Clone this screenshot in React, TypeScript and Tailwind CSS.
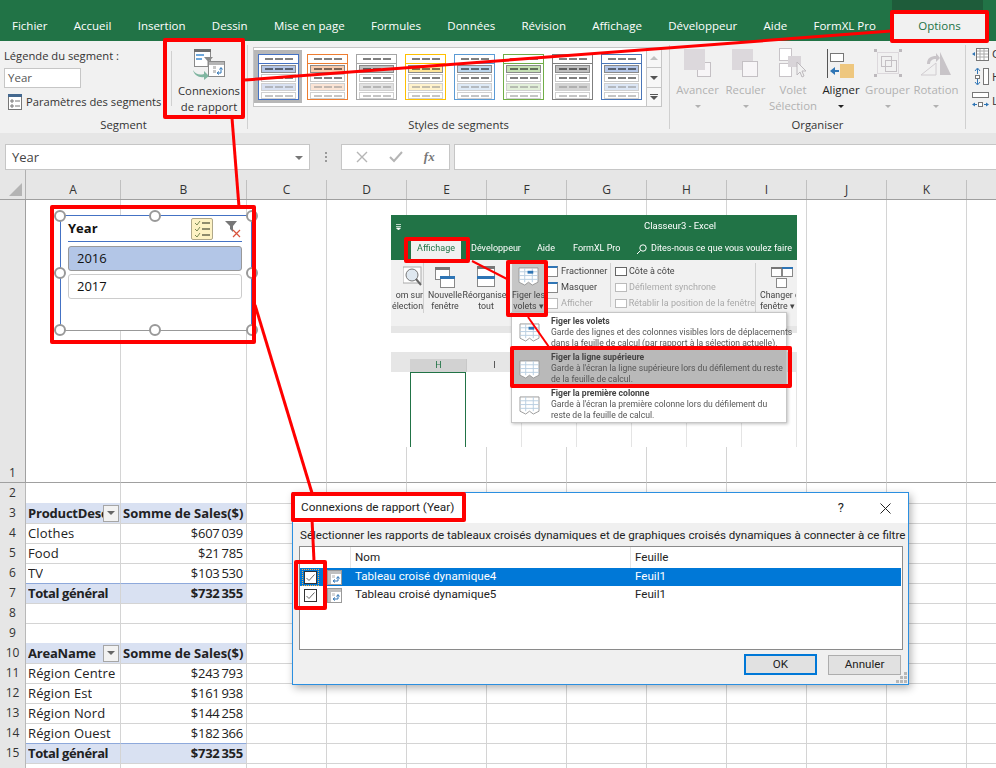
import React from "react";

const tabs = ["Fichier", "Accueil", "Insertion", "Dessin", "Mise en page", "Formules", "Données", "Révision", "Affichage", "Développeur", "Aide", "FormXL Pro"];
const columns = ["C", "D", "E", "F", "G", "H", "I", "J", "K", ""];

const swatches = [
  { edge: "#4472c4", dark: "#b4c6e7", light: "#d9e1f2" },
  { edge: "#ed7d31", dark: "#f8cbad", light: "#fbe4d5" },
  { edge: "#a5a5a5", dark: "#c0c0c0", light: "#e2e2e2" },
  { edge: "#ffc000", dark: "#ffe699", light: "#fff2cc" },
  { edge: "#5b9bd5", dark: "#bdd7ee", light: "#deeaf6" },
  { edge: "#70ad47", dark: "#c5e0b4", light: "#e2efd9" },
  { edge: "#7f7f7f", dark: "#bfbfbf", light: "#d4d4d4" },
  { edge: "#4a76b8", dark: "#b4c6e7", light: "#dce6f5" },
];

type Row = { n: number; kind?: "head" | "total"; a?: string; b?: string; filter?: boolean };

const rows: Row[] = [
  { n: 2 },
  { n: 3, kind: "head", a: "ProductDesc", b: "Somme de Sales($)", filter: true },
  { n: 4, a: "Clothes", b: "$607\u2009039" },
  { n: 5, a: "Food", b: "$21\u2009785" },
  { n: 6, a: "TV", b: "$103\u2009530" },
  { n: 7, kind: "total", a: "Total général", b: "$732\u2009355" },
  { n: 8 },
  { n: 9 },
  { n: 10, kind: "head", a: "AreaName", b: "Somme de Sales($)", filter: true },
  { n: 11, a: "Région Centre", b: "$243\u2009793" },
  { n: 12, a: "Région Est", b: "$161\u2009938" },
  { n: 13, a: "Région Nord", b: "$144\u2009258" },
  { n: 14, a: "Région Ouest", b: "$182\u2009366" },
  { n: 15, kind: "total", a: "Total général", b: "$732\u2009355" },
  { n: 16 },
];

function Swatch({ edge, dark, light }: { edge: string; dark: string; light: string }) {
  const dash = (y: number, color: string) => (
    <path d={`M7 ${y}h8M17 ${y}h8M27 ${y}h8`} stroke={color} strokeWidth="1" fill="none" />
  );
  return (
    <svg width="41" height="46" viewBox="0 0 41 46">
      <rect x="0.5" y="0.5" width="40" height="45" fill="#fff" stroke={edge} />
      <rect x="0.5" y="0.5" width="40" height="9" fill="#fff" stroke={edge} />
      <rect x="3.5" y="11.5" width="34" height="7" fill={dark} stroke="#8a8a8a" />
      <rect x="3.5" y="20.5" width="34" height="7" fill="#fff" stroke="#c8c8c8" />
      <rect x="3.5" y="29.5" width="34" height="7" fill={light} stroke="#d0d0d0" />
      <rect x="3.5" y="38.5" width="34" height="6" fill="#fff" stroke="#d0d0d0" />
      {dash(5, "#000")}
      {dash(15, "#000")}
      {dash(24, "#000")}
      {dash(33, "#8a8a8a")}
      {dash(42, "#8a8a8a")}
    </svg>
  );
}

function ReportIcon() {
  return (
    <svg width="33" height="31" viewBox="0 0 33 31">
      <rect x="1.5" y="0.5" width="16" height="17" fill="#fff" stroke="#8a8a8a" />
      <rect x="1" y="0" width="17" height="3" fill="#6e6e6e" />
      <path d="M3 5h8v2H3zM3 9h6v2H3z" fill="#6fa8dc" />
      <path d="M11 8h9l-3.5 4v5l-2 1v-6z" fill="#8a8a8a" />
      <rect x="15.5" y="12.5" width="16" height="15" fill="#fff" stroke="#8a8a8a" />
      <rect x="16" y="13" width="15" height="3" fill="#b5b5b5" />
      <path d="M20 17h3v3h-3zM20 21h3v3h-3z" fill="#c8c8c8" />
      <path d="M25 24h3v-5M26.5 20.5l1.5-2 1.5 2M26 22.5l-2 1.5 2 1.5" stroke="#2f75b5" strokeWidth="1" fill="none" />
      <path d="M0 21c3 5 7 5 11 4v-3l5 5-5 4v-3c-5 1-10-2-11-7z" fill="#7fb5a0" />
    </svg>
  );
}

function PaneIcon({ highlight }: { highlight?: boolean }) {
  return (
    <svg className="shrink-0" width="21" height="19" viewBox="0 0 22 20">
      <path d="M1 1h20v15l-6 3-4-3-4 3-6-3z" fill="#fff" stroke="#9a9a9a" />
      <path d="M1 5h20M1 9h20M1 13h20M7 1v15M15 1v15" stroke="#b9cfe0" />
      {highlight && <rect x="10" y="4" width="6" height="3" fill="#2f75b5" />}
    </svg>
  );
}

function LinkIcon() {
  return (
    <svg width="15" height="15" viewBox="0 0 15 15">
      <rect x="0.5" y="0.5" width="14" height="14" fill="#fff" stroke="#9a9a9a" />
      <path d="M1 1h13v3H1zM1 4h3v10H1z" fill="#c0c0c0" />
      <path d="M5 5h3v3H5z" fill="#d8d8d8" />
      <path d="M7 11h4V7M9.5 8.5L11 6.5l1.5 2M8 9.5L6 11l2 1.5" stroke="#2f75b5" fill="none" />
    </svg>
  );
}

function CheckBox({ focus }: { focus?: boolean }) {
  return (
    <div className={`flex h-[15px] w-[15px] items-center justify-center ${focus ? "outline-1 outline-dotted outline-[#ffb13d]" : ""}`}>
      <div className="flex h-[13px] w-[13px] items-center justify-center border border-[#333] bg-white">
        <svg width="11" height="11" viewBox="0 0 11 11">
          <path d="M1.5 6l2.5 2.5 5.5-6" stroke="#666" strokeWidth="1" fill="none" />
        </svg>
      </div>
    </div>
  );
}

function Group({ className, label, children }: { className: string; label: string; children: React.ReactNode }) {
  return (
    <div className={`mt-1 flex h-[84px] shrink-0 flex-col border-r border-[#d0d0d0] ${className}`}>
      <div className="flex h-[72px]">{children}</div>
      <div className="h-[12px] text-center text-[11.3px] leading-[16px] text-[#333]">{label}</div>
    </div>
  );
}

function ArrangeButton({ className, lines, icon, dark }: { className: string; lines: string[]; icon: React.ReactNode; dark?: boolean }) {
  return (
    <div className={`flex flex-col items-center pt-[2px] text-[11.4px] leading-[16px] ${dark ? "text-[#222]" : "text-[#b1b1b1]"} ${className}`}>
      <div className="flex h-[32px] items-center justify-center">{icon}</div>
      <div className="mt-[3px] whitespace-nowrap">{lines[0]}</div>
      {lines[1] ? (
        <div className="whitespace-nowrap">{lines[1]}</div>
      ) : (
        <div className="flex h-[16px] items-center">
          <div className="h-0 w-0 border-x-[3px] border-t-[3px] border-x-transparent border-t-current" />
        </div>
      )}
    </div>
  );
}

function Ribbon() {
  return (
    <div className="flex h-[92px] bg-[#f1f1f1] text-[#333]">
      <Group className="w-[248px]" label="Segment">
        <div className="w-[171px] pl-1 pt-[3px] text-[11.2px] leading-[16px]">
          <div>Légende du segment :</div>
          <div className="mt-1 h-[20px] w-[77px] border border-[#c6c6c6] bg-white pl-[3px] text-[11.5px] leading-[18px] text-[#555]">Year</div>
          <div className="ml-1 mt-[6px] flex h-[16px] items-center gap-1 whitespace-nowrap">
            <svg width="14" height="16" viewBox="0 0 14 16">
              <rect x="0.5" y="0.5" width="13" height="15" fill="#fff" stroke="#777" />
              <rect x="0" y="0" width="14" height="3" fill="#44688f" />
              <path d="M3 6h2v2H3zM3 11h2v2H3zM7 7h5M7 12h5" stroke="#777" fill="none" />
            </svg>
            Paramètres des segments
          </div>
        </div>
        <div className="my-[6px] h-[55px] border-l border-[#d0d0d0]" />
        <div className="flex w-[74px] flex-col items-center pt-[4px] text-[11.3px] leading-[16px]">
          <ReportIcon />
          <div className="mt-[3px] whitespace-nowrap">Connexions</div>
          <div className="whitespace-nowrap">de rapport</div>
        </div>
      </Group>
      <Group className="w-[422px]" label="Styles de segments">
        <div className="ml-[5px] mt-[2px] flex h-[60px] w-[409px] border border-[#c6c6c6] bg-white">
          {swatches.map((s, i) => (
            <div key={i} className="w-[49px] pt-[2px]">
              <div className={`h-[53px] w-[48px] pl-[4px] pt-[4px] ${i === 0 ? "bg-[#b7b7b7]" : ""}`}>
                <Swatch {...s} />
              </div>
            </div>
          ))}
          <div className="flex w-[15px] flex-col border-l border-[#c6c6c6] bg-[#f7f7f7]">
            <div className="flex h-[20px] items-center justify-center border-b border-[#c6c6c6]">
              <div className="h-0 w-0 border-x-[4px] border-b-[4px] border-x-transparent border-b-[#c0c0c0]" />
            </div>
            <div className="flex h-[20px] items-center justify-center border-b border-[#c6c6c6]">
              <div className="h-0 w-0 border-x-[4px] border-t-[4px] border-x-transparent border-t-[#555]" />
            </div>
            <div className="flex flex-1 flex-col items-center justify-center gap-[1px]">
              <div className="h-[1px] w-[8px] bg-[#555]" />
              <div className="h-0 w-0 border-x-[4px] border-t-[4px] border-x-transparent border-t-[#555]" />
            </div>
          </div>
        </div>
      </Group>
      <Group className="w-[296px]" label="Organiser">
        <div className="w-[2px]" />
        <ArrangeButton
          className="w-[51px]"
          lines={["Avancer"]}
          icon={
            <svg width="27" height="28" viewBox="0 0 27 28">
              <rect x="13.5" y="13.5" width="13" height="14" fill="#f7f5f7" stroke="#c4c0c4" />
              <rect x="0" y="0" width="21" height="21" fill="#dcd8dc" />
            </svg>
          }
        />
        <ArrangeButton
          className="w-[45px]"
          lines={["Reculer"]}
          icon={
            <svg width="27" height="28" viewBox="0 0 27 28">
              <rect x="0" y="0" width="21" height="21" fill="#dcd8dc" />
              <rect x="10.5" y="12.5" width="15" height="15" fill="#f7f5f7" stroke="#c4c0c4" />
            </svg>
          }
        />
        <ArrangeButton
          className="w-[50px]"
          lines={["Volet", "Sélection"]}
          icon={
            <svg width="28" height="30" viewBox="0 0 28 30">
              <rect x="0.5" y="0.5" width="12" height="12" fill="#fff" stroke="#c8c4c8" />
              <rect x="0.5" y="15.5" width="12" height="13" fill="#fff" stroke="#c8c4c8" />
              <rect x="9" y="8" width="13" height="11" fill="#d8d4d8" />
              <path d="M18 14v13l3-3 2 5 2-1-2-5h4z" fill="#f1f1f1" stroke="#bdb9bd" />
            </svg>
          }
        />
        <ArrangeButton
          className="w-[46px]"
          dark
          lines={["Aligner"]}
          icon={
            <svg width="28" height="29" viewBox="0 0 28 29">
              <path d="M0.5 0v29" stroke="#555" />
              <rect x="3.5" y="4.5" width="13" height="8" fill="#fff" stroke="#777" />
              <rect x="13" y="15" width="14" height="14" fill="#eec77f" />
              <path d="M3 22l5-4v3h4v2H8v3z" fill="#2f75b5" />
            </svg>
          }
        />
        <ArrangeButton
          className="w-[47px]"
          lines={["Grouper"]}
          icon={
            <svg width="28" height="28" viewBox="0 0 28 28">
              <rect x="3.5" y="3.5" width="21" height="21" fill="none" stroke="#dcd8dc" />
              <rect x="7.5" y="7.5" width="10" height="10" fill="none" stroke="#c4c0c4" />
              <rect x="11.5" y="11.5" width="11" height="11" fill="none" stroke="#c4c0c4" />
              <path d="M0 0h3v3H0zM25 0h3v3h-3zM0 25h3v3H0zM25 25h3v3h-3z" fill="#bdb9bd" />
            </svg>
          }
        />
        <ArrangeButton
          className="w-[50px]"
          lines={["Rotation"]}
          icon={
            <svg width="30" height="26" viewBox="0 0 30 26">
              <path d="M0 25l15-12v12z" fill="#f1f1f1" stroke="#d0ccd0" />
              <path d="M19 2l11 23H19z" fill="#c8c4c8" />
              <path d="M6 14c0-6 4-8 9-8v-3l4 5-4 4V9c-4 0-6 2-6 5z" fill="#c8c4c8" />
            </svg>
          }
        />
      </Group>
      <div className="flex shrink-0 flex-col gap-[7px] pl-[6px] pt-[6px] text-[11.5px] leading-[14px]">
        <div className="flex items-center gap-[3px]">
          <svg width="17" height="13" viewBox="0 0 17 13">
            <rect x="4.5" y="0.5" width="12" height="12" fill="#fff" stroke="#777" />
            <path d="M5 3h11M5 6h11M5 9h11M8 1v11M12 1v11" stroke="#aaa" />
            <path d="M0 6l3-2v4z" fill="#2f75b5" />
          </svg>
          C
        </div>
        <div className="flex items-center gap-[3px]">
          <svg width="17" height="17" viewBox="0 0 17 17">
            <rect x="11.5" y="0.5" width="5" height="16" fill="#fff" stroke="#777" />
            <rect x="3.5" y="7.5" width="4" height="3" fill="#fff" stroke="#777" />
            <path d="M5.5 6V1M3 3l2.5-3L8 3M5.5 11v5M3 14l2.5 3L8 14" stroke="#2f75b5" fill="none" />
          </svg>
          H
        </div>
        <div className="flex items-center gap-[3px]">
          <svg width="17" height="17" viewBox="0 0 17 17">
            <rect x="0.5" y="0.5" width="16" height="5" fill="#fff" stroke="#777" />
            <rect x="6.5" y="10.5" width="4" height="4" fill="#fff" stroke="#777" />
            <path d="M1 12.5h4M12 12.5h4" stroke="#2f75b5" />
            <path d="M0 12.5l3-2v4zM17 12.5l-3-2v4z" fill="#2f75b5" />
          </svg>
          L
        </div>
      </div>
    </div>
  );
}

function FormulaBar() {
  return (
    <div className="h-[37px] bg-[#e6e6e6] pt-[11px]">
      <div className="flex h-[26px] text-[#444]">
        <div className="ml-[5px] flex w-[305px] items-center justify-between border border-[#c6c6c6] bg-white pl-[6px] pr-[6px] pt-[1px] text-[13px]">
          Year
          <div className="h-0 w-0 border-x-[4px] border-t-[4px] border-x-transparent border-t-[#777]" />
        </div>
        <div className="flex w-[31px] flex-col items-center justify-center gap-[2px]">
          <div className="h-[2px] w-[2px] bg-[#999]" />
          <div className="h-[2px] w-[2px] bg-[#999]" />
          <div className="h-[2px] w-[2px] bg-[#999]" />
        </div>
        <div className="flex w-[109px] items-center justify-around border border-[#c6c6c6] bg-white px-1">
          <svg width="12" height="12" viewBox="0 0 12 12">
            <path d="M1 1l10 10M11 1L1 11" stroke="#b5b5b5" strokeWidth="1.4" />
          </svg>
          <svg width="14" height="12" viewBox="0 0 14 12">
            <path d="M1 6l4 4 8-9" stroke="#b5b5b5" strokeWidth="2" fill="none" />
          </svg>
          <span className="[font-family:'Liberation_Serif',serif] text-[13px] font-bold italic text-[#777]">fx</span>
        </div>
        <div className="ml-1 flex-1 border border-r-0 border-[#c6c6c6] bg-white" />
      </div>
    </div>
  );
}

function ColumnHeaders() {
  return (
    <div className="grid h-[30px] grid-cols-[26px_95px_126px_repeat(9,80px)_30px] border-b border-[#9f9f9f] bg-[#e6e6e6] text-[12px] text-[#333]">
      <div className="relative border-r border-[#b0b0b0]">
        <div className="absolute bottom-[3px] right-[3px] h-0 w-0 border-b-[13px] border-l-[13px] border-b-[#b4b4b4] border-l-transparent" />
      </div>
      {["A", "B", ...columns].map((c, i) => (
        <div key={i} className="mt-[10px] flex h-[19px] items-center justify-center border-r border-[#c0c0c0]">
          {c}
        </div>
      ))}
    </div>
  );
}

function SheetRow({ row }: { row: Row }) {
  const filled = row.kind ? "bg-[#d9e1f2]" : "";
  const bold = row.kind ? "font-bold" : "";
  const edge = row.kind === "total" ? "border-t border-t-[#8ea9db]" : "";
  const nameTrack = row.kind === "total" ? "tracking-[-0.4px]" : row.kind === "head" ? "tracking-[-0.2px]" : "tracking-[0.15px]";
  const valueTrack = row.kind === "head" ? "" : "tracking-[-0.25px]";
  return (
    <div className="grid h-[20px] grid-cols-[26px_95px_126px_repeat(9,80px)_30px] text-[13px] leading-[21px] text-[#222]">
      <div className="border-b border-r border-[#b8b8b8] bg-[#e6e6e6] text-center text-[12px] leading-[20px] text-[#333]">{row.n < 16 ? row.n : ""}</div>
      <div className={`flex items-center justify-between overflow-hidden border-b border-r border-[#d4d4d4] pl-[2px] whitespace-nowrap ${filled} ${bold} ${edge}`}>
        <span className={`min-w-0 overflow-hidden ${nameTrack}`}>{row.a}</span>
        {row.filter && (
          <span className="mr-[1px] flex h-[17px] w-[16px] shrink-0 items-center justify-center border border-[#a6a6a6] bg-[#f2f2f2]">
            <span className="h-0 w-0 border-x-[4px] border-t-[4px] border-x-transparent border-t-[#666]" />
          </span>
        )}
      </div>
      <div className={`flex items-center overflow-hidden border-b border-r border-[#d4d4d4] pr-[3px] pl-[2px] whitespace-nowrap ${row.kind === "head" ? "justify-start" : "justify-end"} ${filled} ${bold} ${edge} ${valueTrack}`}>
        {row.b}
      </div>
      {columns.map((c, i) => (
        <div key={i} className="border-b border-r border-[#d4d4d4]" />
      ))}
    </div>
  );
}

function Sheet() {
  return (
    <div className="bg-white">
      <ColumnHeaders />
      <div className="grid h-[283px] grid-cols-[26px_95px_126px_repeat(9,80px)_30px]">
        <div className="flex items-end justify-center border-b border-r border-[#a0a0a0] bg-[#e6e6e6] text-[12px] leading-[19px] text-[#333]">1</div>
        {["A", "B", ...columns].map((c, i) => (
          <div key={i} className="border-b border-r border-b-[#a0a0a0] border-r-[#d4d4d4]" />
        ))}
      </div>
      {rows.map((r) => (
        <SheetRow key={r.n} row={r} />
      ))}
    </div>
  );
}

function Handle({ className }: { className: string }) {
  return <div className={`absolute h-[12px] w-[12px] rounded-full border-2 border-[#999] bg-white ${className}`} />;
}

function Slicer() {
  return (
    <div className="absolute left-[60px] top-[215px] h-[116px] w-[192px] border border-[#4472c4] border-b-[#999] bg-white pl-[7px] pr-[9px] text-[13px] text-[#111]">
      <div className="flex h-[25px] items-center justify-between">
        <span className="font-bold">Year</span>
        <div className="flex items-center gap-[12px]">
          <div className="flex h-[22px] w-[22px] items-center justify-center rounded-[2px] border border-[#b0a88a] bg-[#fdf2c4]">
            <svg width="17" height="17" viewBox="0 0 17 17">
              <path d="M1 3l2 2 3-4M1 9l2 2 3-4M1 15l2 2 3-4" stroke="#7a8a55" fill="none" />
              <path d="M8 3h8M8 9h8M8 15h8" stroke="#6a6a50" strokeWidth="1.3" />
            </svg>
          </div>
          <svg width="17" height="18" viewBox="0 0 17 18">
            <path d="M0 1h12L8 6v6L5 9V6z" fill="#777" />
            <path d="M8 10l7 7M15 10l-7 7" stroke="#d9533b" strokeWidth="1.2" />
          </svg>
        </div>
      </div>
      <div className="border-t border-[#4472c4] pt-[4px]">
        <div className="flex h-[25px] items-center rounded-[3px] border border-[#999] bg-[#b3c6e7] pl-[8px]">2016</div>
        <div className="mt-[3px] flex h-[25px] items-center rounded-[3px] border border-[#ccc] bg-white pl-[8px]">2017</div>
      </div>
      <Handle className="-left-[7px] -top-[6px]" />
      <Handle className="left-[88px] -top-[6px]" />
      <Handle className="-right-[7px] -top-[6px]" />
      <Handle className="-left-[7px] top-[51px]" />
      <Handle className="-right-[7px] top-[51px]" />
      <Handle className="-left-[7px] -bottom-[6px]" />
      <Handle className="left-[88px] -bottom-[6px]" />
      <Handle className="-right-[7px] -bottom-[6px]" />
    </div>
  );
}

function MiniButton({ className, lines, icon }: { className: string; lines: string[]; icon: React.ReactNode }) {
  return (
    <div className={`flex flex-col items-center pt-[3px] text-center text-[8.8px] leading-[11px] text-[#444] ${className}`}>
      <div className="flex h-[27px] items-center">{icon}</div>
      {lines.map((l) => (
        <div key={l} className="whitespace-nowrap">{l}</div>
      ))}
    </div>
  );
}

function MiniMenuItem({ className, title, lines, highlight }: { className: string; title: string; lines: string[]; highlight?: boolean }) {
  return (
    <div className={`flex pl-[7px] ${className}`}>
      <div className="flex w-[32px] shrink-0 items-center">
        <PaneIcon highlight={highlight} />
      </div>
      <div className="whitespace-nowrap text-[8.6px] leading-[11px] text-[#555]">
        <div className="font-bold leading-[12px] text-[#444]">{title}</div>
        {lines.map((l) => (
          <div key={l}>{l}</div>
        ))}
      </div>
    </div>
  );
}

function EmbeddedShot() {
  return (
    <div className="absolute left-[391px] top-[215px] h-[232px] w-[406px] overflow-hidden bg-white blur-[0.4px] [font-family:Roboto,sans-serif]">
      <div className="h-[45px] bg-[#217346] text-[9px] text-white">
        <div className="relative flex h-[23px] items-center">
          <svg className="ml-[5px]" width="5" height="6" viewBox="0 0 5 6">
            <path d="M0 0.5h5M0 2.5h5M0.5 4l2 2 2-2z" fill="#fff" stroke="#fff" strokeWidth="0.7" />
          </svg>
          <span className="absolute left-[253px] text-[9.5px]">Classeur3 - Excel</span>
        </div>
        <div className="flex h-[22px] items-center whitespace-nowrap">
          <div className="ml-[20px] flex h-[22px] w-[50px] items-center justify-center bg-[#f1f1f1] text-[#217346]">Affichage</div>
          <span className="ml-[10px] w-[47px]">Développeur</span>
          <span className="ml-[19px] w-[17px]">Aide</span>
          <span className="ml-[19px] w-[44px]">FormXL Pro</span>
          <svg className="ml-[19px]" width="11" height="11" viewBox="0 0 11 11">
            <circle cx="7" cy="4" r="3.2" fill="none" stroke="#fff" />
            <path d="M4.5 6.5L1 10" stroke="#fff" />
          </svg>
          <span className="ml-[4px]">Dites-nous ce que vous voulez faire</span>
        </div>
      </div>
      <div className="flex h-[66px] bg-[#f1f1f1]">
        <MiniButton
          className="w-[32px] items-end"
          lines={["om sur", "élection"]}
          icon={
            <svg width="20" height="22" viewBox="0 0 20 22">
              <rect x="0" y="1" width="18" height="16" fill="#fff" stroke="#aaa" />
              <circle cx="9" cy="9" r="6" fill="#dfe8f0" stroke="#777" />
              <path d="M13 13l5 6" stroke="#666" strokeWidth="2" />
            </svg>
          }
        />
        <div className="my-[3px] h-[50px] border-l border-[#d0d0d0]" />
        <MiniButton
          className="w-[42px]"
          lines={["Nouvelle", "fenêtre"]}
          icon={
            <svg width="20" height="22" viewBox="0 0 20 22">
              <rect x="0.5" y="1.5" width="14" height="12" fill="#fff" stroke="#888" />
              <rect x="0" y="1" width="15" height="3" fill="#777" />
              <rect x="5.5" y="10.5" width="14" height="11" fill="#fff" stroke="#888" />
              <rect x="5" y="10" width="15" height="3" fill="#2f75b5" />
            </svg>
          }
        />
        <MiniButton
          className="w-[40px]"
          lines={["Réorganiser", "tout"]}
          icon={
            <svg width="18" height="22" viewBox="0 0 18 22">
              <rect x="0.5" y="0.5" width="17" height="20" fill="#fff" stroke="#888" />
              <rect x="0" y="0" width="18" height="3" fill="#777" />
              <rect x="0" y="10" width="18" height="3" fill="#2f75b5" />
            </svg>
          }
        />
        <div className="ml-[6px] h-[54px] w-[33px] bg-[#c6c6c6]">
          <MiniButton
            className="w-[33px]"
            lines={["Figer les", "volets ▾"]}
            icon={<PaneIcon highlight />}
          />
        </div>
        <div className="ml-[2px] flex w-[63px] flex-col gap-[4px] pt-[5px] text-[9.2px] leading-[12px] text-[#444]">
          <div className="flex items-center gap-[3px]"><div className="h-[11px] w-[11px] border border-[#888] border-t-2 border-t-[#2f75b5] bg-white" />Fractionner</div>
          <div className="flex items-center gap-[3px]"><div className="h-[11px] w-[11px] border border-[#888] border-t-2 border-t-[#2f75b5] bg-white" />Masquer</div>
          <div className="flex items-center gap-[3px] text-[#aaa]"><div className="h-[11px] w-[11px] border border-[#bbb] bg-white" />Afficher</div>
        </div>
        <div className="my-[3px] h-[44px] border-l border-[#d0d0d0]" />
        <div className="ml-[4px] flex w-[140px] flex-col gap-[4px] pt-[5px] whitespace-nowrap text-[9px] leading-[12px] text-[#aaa]">
          <div className="flex items-center gap-[2px] text-[#444]"><div className="h-[9px] w-[12px] border border-[#666] bg-white" />Côte à côte</div>
          <div className="flex items-center gap-[2px]"><div className="h-[9px] w-[12px] border border-[#bbb] bg-white" />Défilement synchrone</div>
          <div className="flex items-center gap-[2px]"><div className="h-[9px] w-[12px] border border-[#bbb] bg-white" />Rétablir la position de la fenêtre</div>
        </div>
        <div className="my-[3px] h-[50px] border-l border-[#d0d0d0]" />
        <MiniButton
          className="w-[40px] items-start overflow-hidden pl-[4px]"
          lines={["Changer de", "fenêtre ▾"]}
          icon={
            <svg className="ml-[11px]" width="22" height="22" viewBox="0 0 22 22">
              <rect x="0.5" y="1.5" width="10" height="9" fill="#fff" stroke="#888" />
              <rect x="11.5" y="1.5" width="10" height="9" fill="#fff" stroke="#888" />
              <rect x="5.5" y="12.5" width="10" height="9" fill="#fff" stroke="#888" />
              <rect x="0" y="1" width="11" height="2" fill="#777" />
              <rect x="11" y="1" width="11" height="2" fill="#2f75b5" />
            </svg>
          }
        />
      </div>
      <div className="h-[7px] bg-[#e6e6e6]" />
      <div className="h-[19px] bg-white" />
      <div className="flex h-[20px] items-end bg-[#e6e6e6] text-[9px] text-[#444]">
        <div className="w-[20px]" />
        <div className="flex h-[13px] w-[58px] items-center justify-center bg-[#d2d2d2] text-[#217346]">H</div>
        {["I", "", "", "", "", ""].map((c, i) => (
          <div key={i} className="flex h-[13px] w-[57px] items-center justify-center border-l border-[#c8c8c8]">{c}</div>
        ))}
      </div>
      <div className="flex h-[75px] bg-white">
        <div className="w-[20px]" />
        <div className="w-[58px] border-x border-t border-[#217346]" />
        {[0, 1, 2, 3, 4, 5].map((i) => (
          <div key={i} className="w-[57px] border-r border-[#e4e4e4]" />
        ))}
      </div>
      <div className="absolute left-[120px] top-[97px] h-[111px] w-[276px] border border-[#c6c6c6] bg-white shadow-[1px_1px_3px_rgba(0,0,0,0.25)]">
        <MiniMenuItem
          className="h-[36px] pt-[2px]"
          title="Figer les volets"
          lines={["Garde des lignes et des colonnes visibles lors de déplacements", "dans la feuille de calcul (par rapport à la sélection actuelle)."]}
          highlight
        />
        <MiniMenuItem
          className="h-[38px] bg-[#b9b9b9] pt-[2px]"
          title="Figer la ligne supérieure"
          lines={["Garde à l'écran la ligne supérieure lors du défilement du reste", "de la feuille de calcul."]}
        />
        <MiniMenuItem
          className="h-[36px]"
          title="Figer la première colonne"
          lines={["Garde à l'écran la première colonne lors du défilement du", "reste de la feuille de calcul."]}
        />
      </div>
    </div>
  );
}

function ReportDialog() {
  return (
    <div className="absolute left-[292px] top-[492px] flex h-[193px] w-[617px] flex-col border border-[#2b8fe0] bg-[#f0f0f0] text-[11.6px] text-[#222] shadow-[2px_3px_8px_rgba(0,0,0,0.3)] [font-family:Roboto,sans-serif]">
      <div className="flex h-[30px] shrink-0 items-center justify-between bg-white pl-[8px] text-[11.8px]">
        <span>Connexions de rapport (Year)</span>
        <div className="flex items-center gap-[36px] pr-[17px]">
          <span className="text-[13px]">?</span>
          <svg width="11" height="11" viewBox="0 0 11 11">
            <path d="M0.5 0.5l10 10M10.5 0.5l-10 10" stroke="#222" />
          </svg>
        </div>
      </div>
      <div className="flex h-[23px] shrink-0 items-center whitespace-nowrap pl-[7px] pt-[3px]">
        Sélectionner les rapports de tableaux croisés dynamiques et de graphiques croisés dynamiques à connecter à ce filtre
      </div>
      <div className="ml-[6px] h-[104px] w-[604px] border border-[#8a8a8a] bg-white pr-[1px]">
        <div className="flex h-[21px] items-center">
          <div className="h-full w-[51px] border-r border-[#e4e4e4]" />
          <div className="h-full w-[280px] border-r border-[#e4e4e4] pl-[4px] leading-[21px]">Nom</div>
          <div className="pl-[4px]">Feuille</div>
        </div>
        {["Tableau croisé dynamique4", "Tableau croisé dynamique5"].map((name, i) => (
          <div key={name} className={`flex h-[18px] items-center ${i === 0 ? "bg-[#0078d7] text-white" : ""}`}>
            <div className="w-[27px] pl-[3px]">
              <CheckBox focus={i === 0} />
            </div>
            <div className="w-[24px]"><LinkIcon /></div>
            <div className="w-[280px] pl-[4px]">{name}</div>
            <div className="pl-[4px]">Feuil1</div>
          </div>
        ))}
      </div>
      <div className="mt-[4px] flex justify-end gap-[11px] pr-[7px]">
        <div className="flex h-[21px] w-[73px] items-center justify-center border-2 border-[#0078d7] bg-[#e1e1e1]">OK</div>
        <div className="mt-[1px] flex h-[20px] w-[73px] items-center justify-center border border-[#adadad] bg-[#e1e1e1]">Annuler</div>
      </div>
      <svg className="absolute bottom-[1px] right-[1px]" width="11" height="11" viewBox="0 0 11 11">
        <path d="M8 0h3v3H8zM4 4h3v3H4zM8 4h3v3H8zM0 8h3v3H0zM4 8h3v3H4zM8 8h3v3H8z" fill="#b8b8b8" />
      </svg>
    </div>
  );
}

function RedMarks() {
  const boxes = [
    "left-[890px] top-[10px] h-[33px] w-[99px]",
    "left-[163px] top-[38px] h-[81px] w-[82px]",
    "left-[50px] top-[205px] h-[139px] w-[206px]",
    "left-[404px] top-[237px] h-[26px] w-[66px]",
    "left-[506px] top-[260px] h-[57px] w-[42px]",
    "left-[510px] top-[346px] h-[42px] w-[282px]",
    "left-[291px] top-[492px] h-[30px] w-[175px]",
    "left-[294px] top-[560px] h-[50px] w-[33px]",
  ];
  return (
    <>
      <svg className="absolute left-0 top-0" width="996" height="768" viewBox="0 0 996 768">
        <g stroke="#ff0000" fill="none">
          <path d="M245 80L891 31" strokeWidth="3" />
          <path d="M232 118L239 207" strokeWidth="3" />
          <path d="M255 305L312 493" strokeWidth="3" />
          <path d="M312 519L314 561" strokeWidth="3" />
          <path d="M472 261L507 279" strokeWidth="2" />
          <path d="M528 317L549 347" strokeWidth="2" />
        </g>
      </svg>
      {boxes.map((b) => (
        <div key={b} className={`absolute rounded-[2px] border-[4px] border-[#ff0000] ${b}`} />
      ))}
    </>
  );
}

export default function App() {
  return (
    <div className="relative h-[768px] w-[996px] overflow-hidden bg-white [font-family:'Open_Sans','Noto_Sans',sans-serif]">
      <div className="flex h-[41px] items-end bg-[#217346] pb-[7px] text-[11.5px] leading-[16px] text-white">
        {tabs.map((t) => (
          <span key={t} className="whitespace-nowrap first:ml-[12px] mr-[26.3px]">{t}</span>
        ))}
      </div>
      <div className="absolute left-[892px] top-0 h-[11px] w-[91px] bg-[#1e5c3a]" />
      <div className="absolute left-[891px] top-[14px] flex h-[27px] w-[97px] items-center justify-center bg-[#f1f1f1] pb-[3px] text-[11.5px] text-[#217346]">Options</div>
      <Ribbon />
      <FormulaBar />
      <Sheet />
      <Slicer />
      <EmbeddedShot />
      <ReportDialog />
      <RedMarks />
    </div>
  );
}
